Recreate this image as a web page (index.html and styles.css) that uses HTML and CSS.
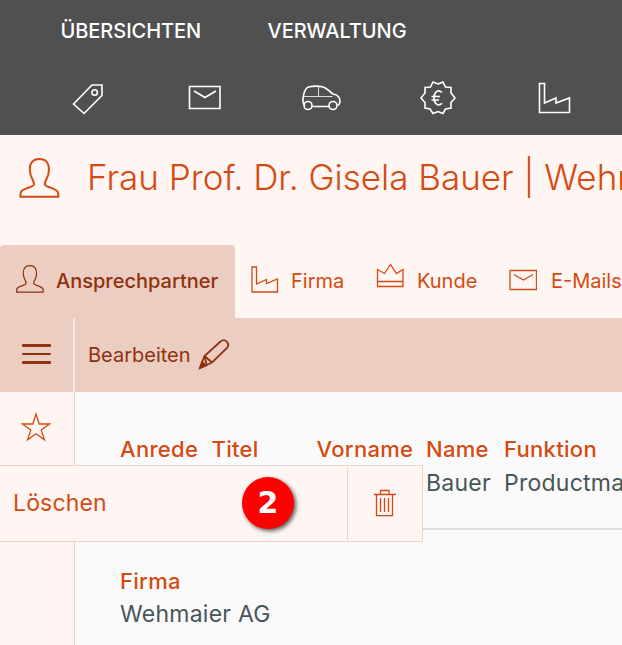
FILE: index.html
```html
<!DOCTYPE html>
<html lang="de">
<head>
<meta charset="utf-8">
<title>Ansprechpartner</title>
<link rel="stylesheet" href="styles.css">
</head>
<body>
<header class="topbar">
  <nav class="menu"><a class="menu-a">ÜBERSICHTEN</a><a class="menu-b">VERWALTUNG</a></nav>
  <div class="shortcuts">
    <svg class="icon" viewBox="0 0 48 48"><path d="M9.5 31 28 12h10v10.500L20 40.500z"/><circle cx="30.700" cy="19.500" r="2.700"/></svg>
    <svg class="icon" viewBox="0 0 48 48"><path d="M9.500 13.500h30.500v22H9.500zM14 18l11 6.500L36 18"/></svg>
    <svg class="icon" viewBox="0 0 48 48"><path d="M8 33c-2.500-2.500-2.300-7-1.500-10.500.8-4 1.800-7.500 5-8.500 4-1 10-1 14-.3 5 1.300 6.500 4.800 10.500 7.300 5 1 7 3.500 7 7 0 2-.7 3.500-2 4.500M15 33.500h17"/><path class="thin" d="M6.500 23.500h29M21.500 14v9.500"/><circle cx="11" cy="32.500" r="4"/><circle cx="36" cy="32.500" r="4"/></svg>
    <svg class="icon" viewBox="0 0 48 48"><path d="m25 11 5-2 2.500 5 5.500.5V20l4 5-4 4.500V35l-5.500 1-2.500 4.500-5-2-5 2-3-4.500-5-1v-5.500L8 25l4-5v-5.500l5.500-.5L20 9z"/><path d="M29 19.500c-4-3.500-8-.7-8 5.300s4 9 8 5.500M18.500 23.500h8.500M18.500 27h7.500"/></svg>
    <svg class="icon" viewBox="0 0 48 48"><path d="M9.500 10.500h5V30l11.500-5v5L39.500 25v14.500h-30z"/></svg>
  </div>
</header>
<section class="heading">
  <svg class="person-lg" viewBox="0 0 40 40"><path d="M1 38.700v-3c0-4 5-5 9-6.500 3-1 4.500-1.500 4.500-3 0-4-4-7-4-13C9.500 5 13.500 1 20 1s10 4 9.300 12.200c0 6-4 9-4 13 0 1.500 1.500 2 4.500 3 4 1.500 9 2.500 9 6.500v3z"/></svg>
  <h1>Frau Prof. Dr. Gisela Bauer | Wehmaier AG</h1>
</section>
<nav class="tabs">
  <a class="tab active"><svg class="person" viewBox="0 0 40 40"><path d="M1 38.700v-3c0-4 5-5 9-6.500 3-1 4.500-1.500 4.500-3 0-4-4-7-4-13C9.500 5 13.500 1 20 1s10 4 9.300 12.200c0 6-4 9-4 13 0 1.500 1.500 2 4.500 3 4 1.500 9 2.500 9 6.500v3z"/></svg><span>Ansprechpartner</span></a>
  <a class="tab firm"><svg viewBox="0 0 28 32"><path d="M1 3h4.500v17l10-4.500v4L26.500 15v13H1z"/></svg><span>Firma</span></a>
  <a class="tab customer"><svg viewBox="0 0 28 32"><path d="M1.500 22.500V5.500l7 4 6-9 6 9 6.500-4v17zM1.500 17.500h25.500"/></svg><span>Kunde</span></a>
  <a class="tab mails"><svg viewBox="0 0 28 32"><path d="M1 6.500h26.500v19H1zM5 10.500l9.500 5.500 9.500-5.500"/></svg><span>E-Mails</span></a>
</nav>
<div class="toolbar">
  <div class="burger"><i></i><i></i><i></i></div>
  <div class="edit"><span>Bearbeiten</span><svg viewBox="0 0 34 34"><path d="M2 31 6.500 19 22.500 4.500c4.500-3.500 10 1.500 6.500 6.500L14 25.500zM6.500 19l7.500 6.500"/><path class="tip" d="m2 31 2-6 4 3.500z"/><path d="m6.500 19 2 8"/></svg></div>
</div>
<main class="body">
  <aside class="side"><svg viewBox="0 0 30 30"><path d="m15 2 3.200 10H28.500l-8.300 6 3.200 9.800-8.400-6-8.400 6L9.800 18 1.500 12h10.300z"/></svg></aside>
  <div class="content">
    <div class="fields">
      <dl class="f1"><dt>Anrede</dt></dl>
      <dl class="f2"><dt>Titel</dt></dl>
      <dl class="f3"><dt>Vorname</dt></dl>
      <dl class="f4"><dt>Name</dt><dd>Bauer</dd></dl>
      <dl class="f5"><dt>Funktion</dt><dd>Productmanager</dd></dl>
    </div>
    <dl class="company"><dt>Firma</dt><dd>Wehmaier AG</dd></dl>
  </div>
  <div class="flyout">
    <span class="delete">Löschen</span><b class="badge">2</b>
    <span class="trash"><svg viewBox="0 0 24 30"><path d="M1 6.500h22M7.500 6V2.500h8.500V6M3.500 7v20.700h16V7M7.500 10v14M11.500 10v14M15.500 10v14"/></svg></span>
  </div>
</main>
</body>
</html>
```
FILE: styles.css
```css
* { box-sizing: border-box; }
body { margin: 0; width: 622px; height: 645px; overflow: hidden; font-family: Inter, "Liberation Sans", sans-serif; background: #fafafa; color: #d44a12; }
svg { display: block; flex: none; fill: none; stroke: currentColor; stroke-width: 1.3; }
.topbar { height: 135px; background: #505050; color: #fff; }
.menu { display: flex; height: 73px; padding: 19px 0 0 60.500px; font-size: 20px; line-height: 24px; font-weight: 500; letter-spacing: -.05px; }
.menu-a { width: 207px; }
.shortcuts { display: flex; gap: 68.400px; padding-left: 64px; }
.icon { width: 48px; height: 48px; stroke-width: 1.6; }
.icon .thin { stroke-width: .8; }
.heading { display: flex; height: 110px; background: #fff5f2; padding: 23px 0 0 19px; overflow: hidden; }
.person-lg { width: 41px; height: 40px; stroke-width: 2; }
h1 { margin: -2px 0 0 27px; font-size: 35px; line-height: 42px; font-weight: 300; white-space: nowrap; }
.tabs { display: flex; height: 73px; background: #fff5f2; font-size: 20px; line-height: 24px; overflow: hidden; }
.tab { display: flex; align-items: center; flex: none; padding-bottom: 2px; }
.tab svg { width: 28px; height: 32px; }
.tab span { margin-left: 12px; }
.tab.active { width: 235px; padding-left: 16px; background: #eccdc1; color: #8f3210; font-weight: 500; border-radius: 4px 4px 0 0; }
.tab .person { height: 28px; stroke-width: 1.8; margin-top: -3px; }
.tab.firm { width: 125px; padding-left: 16px; }
.tab.firm svg { margin-top: -2px; }
.tab.customer { width: 133px; padding-left: 16px; }
.tab.customer svg { margin-top: -1px; }
.tab.customer span { margin-left: 13px; }
.tab.mails { padding-left: 16px; }
.tab.mails svg { margin-top: -2px; }
.tab.mails span { margin-left: 14px; }
.toolbar { display: flex; height: 74px; background: #eccdc1; color: #8f3210; }
.burger { width: 75px; padding: 26px 0 0 22px; border-right: 2px solid #f8e6df; display: flex; flex-direction: column; gap: 6px; }
.burger i { width: 29px; height: 2.500px; background: currentColor; border-radius: 1px; }
.edit { display: flex; align-items: center; padding-left: 13px; font-size: 20px; }
.edit svg { width: 34px; height: 34px; margin: -3px 0 0 7px; stroke-width: 1.8; }
.tip { fill: currentColor; }
.body { position: relative; display: flex; height: 253px; }
.side { width: 75px; flex: none; padding: 20px 0 0 21.300px; background: #fff5f2; border-right: 1px solid #f0d3c8; }
.side svg { width: 30px; height: 30px; }
.content { flex: 1; min-width: 0; overflow: hidden; }
dl, dd { margin: 0; }
dl { line-height: 33px; white-space: nowrap; flex: none; }
dt { font-size: 22px; font-weight: 500; letter-spacing: .3px; }
dd { font-size: 23px; letter-spacing: .25px; color: #485558; margin-top: 1px; }
.fields { display: flex; height: 138px; padding: 41px 0 0 45px; border-bottom: 2px solid #dcdcdc; }
.f1 { width: 91.500px; }
.f2 { width: 105px; }
.f3 { width: 109.500px; }
.f4 { width: 78px; }
.company { padding: 35px 0 0 45px; }
.company dd { margin-top: 0; }
.flyout { position: absolute; left: 0; top: 73px; width: 423px; height: 77px; display: flex; align-items: center; padding-left: 13px; background: #fff5f2; border: 1px solid #f0d3c8; border-left: 0; font-size: 23px; }
.delete { width: 229px; margin-top: -2px; letter-spacing: .15px; }
.badge { width: 52px; height: 52px; margin-top: -2px; border-radius: 50%; background: #f00; color: #fff; box-shadow: 2px 2px 4px rgba(0,0,0,.65); text-align: center; font: bold 30px/52px "DejaVu Sans", sans-serif; }
.trash { margin-left: auto; width: 75px; height: 73px; border-left: 1px solid #f0d3c8; padding: 21px 0 0 25px; }
.trash svg { width: 24px; height: 30px; }
```
